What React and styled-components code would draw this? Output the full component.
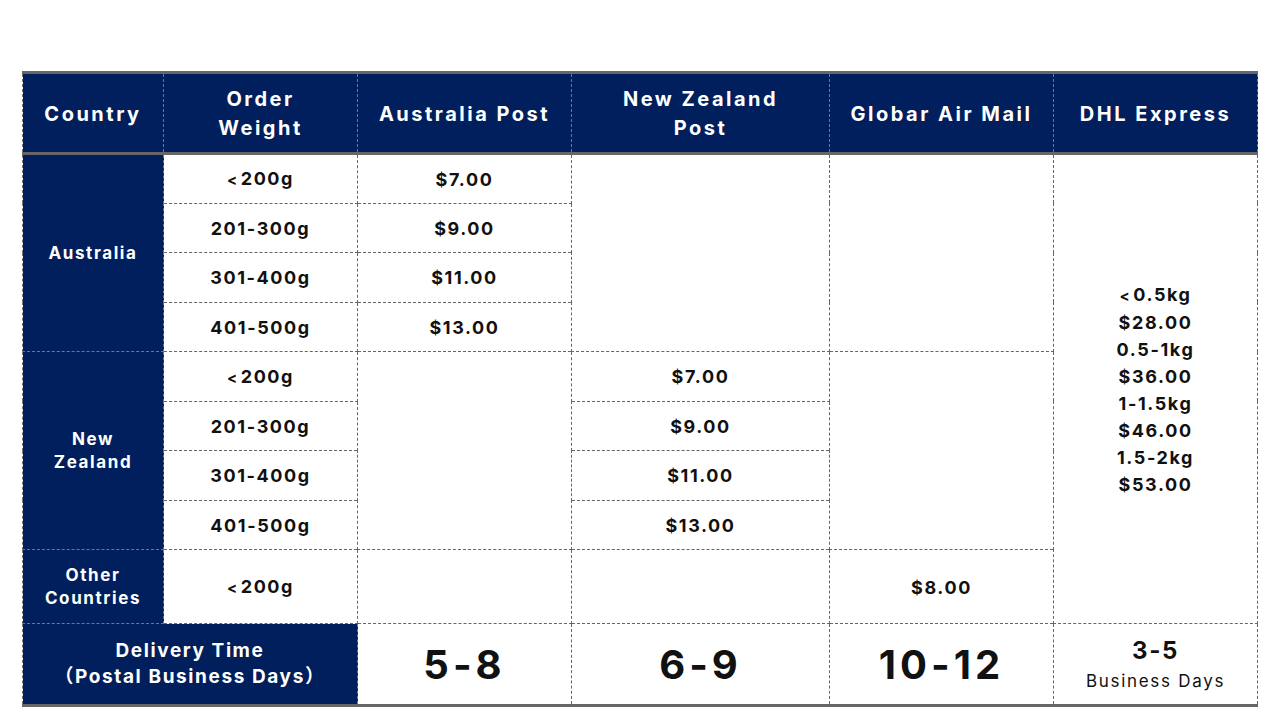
import React from "react";
import styled, { createGlobalStyle } from "styled-components";

const GlobalStyle = createGlobalStyle`
    body {
        margin: 0;
        background: #ffffff;
        font-family: Inter, "Noto Sans CJK JP", sans-serif;
    }
`;

const Page = styled.div`
    padding: 71px 0 0 22px;
`;

const Table = styled.table`
    width: 1235px;
    table-layout: fixed;
    border-collapse: collapse;
    text-align: center;
    letter-spacing: 0.1em;
    font-weight: 700;
    color: #111111;
`;

const HeadRow = styled.tr`
    height: 81px;
`;

const Row = styled.tr`
    height: ${(p) => p.$h || 49.5}px;
`;

const Th = styled.th`
    background: #001f5c;
    color: #ffffff;
    font-size: 20px;
    line-height: 29px;
    font-weight: 700;
    letter-spacing: 0.125em;
    padding: 2px 4px 0;
    border: 1px dashed #777777;
    border-top: 3px solid #666666;
    border-bottom: 3px solid #666666;
`;

const Side = styled.td`
    background: #001f5c;
    color: #ffffff;
    font-size: ${(p) => p.$size || 17}px;
    line-height: ${(p) => p.$lh || 23}px;
    padding: 0;
    border: 1px dashed #777777;
    ${(p) => p.$last && "border-bottom: 3px solid #666666;"}
`;

const Cell = styled.td`
    font-size: 18px;
    line-height: 27px;
    padding: 1px 0 0;
    border: 1px dashed #666666;
    ${(p) => p.$last && "border-bottom: 3px solid #666666;"}
`;

const Lt = styled.span`
    font-size: 15px;
    margin-right: 2px;
`;

const Big = styled.span`
    font-size: 40px;
    line-height: 44px;
    letter-spacing: 0.1em;
`;

const Mid = styled.div`
    font-size: 24px;
    line-height: 28px;
`;

const Small = styled.div`
    font-size: 17px;
    line-height: 22px;
    font-weight: 400;
    letter-spacing: 0.1em;
    margin-top: 5px;
`;

const weights = ["200g", "201-300g", "301-400g", "401-500g"];
const prices = ["$7.00", "$9.00", "$11.00", "$13.00"];
const dhl = ["<0.5kg", "$28.00", "0.5-1kg", "$36.00", "1-1.5kg", "$46.00", "1.5-2kg", "$53.00"];

function Weight({ value, less }) {
    return less ? <><Lt>&lt;</Lt>{value}</> : value;
}

function App() {
    return (
        <Page>
            <GlobalStyle />
            <Table>
                <colgroup>
                    <col style={{ width: 141 }} />
                    <col style={{ width: 194 }} />
                    <col style={{ width: 214 }} />
                    <col style={{ width: 258 }} />
                    <col style={{ width: 224 }} />
                    <col style={{ width: 204 }} />
                </colgroup>
                <thead>
                    <HeadRow>
                        <Th>Country</Th>
                        <Th>Order<br />Weight</Th>
                        <Th>Australia Post</Th>
                        <Th>New Zealand<br />Post</Th>
                        <Th>Globar Air Mail</Th>
                        <Th>DHL Express</Th>
                    </HeadRow>
                </thead>
                <tbody>
                    {weights.map((w, i) => (
                        <Row key={"au" + w}>
                            {i === 0 && <Side rowSpan={4}>Australia</Side>}
                            <Cell><Weight value={w} less={i === 0} /></Cell>
                            <Cell>{prices[i]}</Cell>
                            {i === 0 && <Cell rowSpan={4} />}
                            {i === 0 && <Cell rowSpan={4} />}
                            {i === 0 && (
                                <Cell rowSpan={9}>
                                    {dhl.map((d) => (
                                        <div key={d}>
                                            {d[0] === "<" ? <Weight value={d.slice(1)} less /> : d}
                                        </div>
                                    ))}
                                </Cell>
                            )}
                        </Row>
                    ))}
                    {weights.map((w, i) => (
                        <Row key={"nz" + w}>
                            {i === 0 && <Side rowSpan={4}>New<br />Zealand</Side>}
                            <Cell><Weight value={w} less={i === 0} /></Cell>
                            {i === 0 && <Cell rowSpan={4} />}
                            <Cell>{prices[i]}</Cell>
                            {i === 0 && <Cell rowSpan={4} />}
                        </Row>
                    ))}
                    <Row $h={74}>
                        <Side>Other<br />Countries</Side>
                        <Cell><Weight value="200g" less /></Cell>
                        <Cell />
                        <Cell />
                        <Cell>$8.00</Cell>
                    </Row>
                    <Row $h={82}>
                        <Side colSpan={2} $size={19} $lh={26} $last>
                            Delivery Time<br />（Postal Business Days）
                        </Side>
                        <Cell $last><Big>5-8</Big></Cell>
                        <Cell $last><Big>6-9</Big></Cell>
                        <Cell $last><Big>10-12</Big></Cell>
                        <Cell $last>
                            <Mid>3-5</Mid>
                            <Small>Business Days</Small>
                        </Cell>
                    </Row>
                </tbody>
            </Table>
        </Page>
    );
}

export default App;
